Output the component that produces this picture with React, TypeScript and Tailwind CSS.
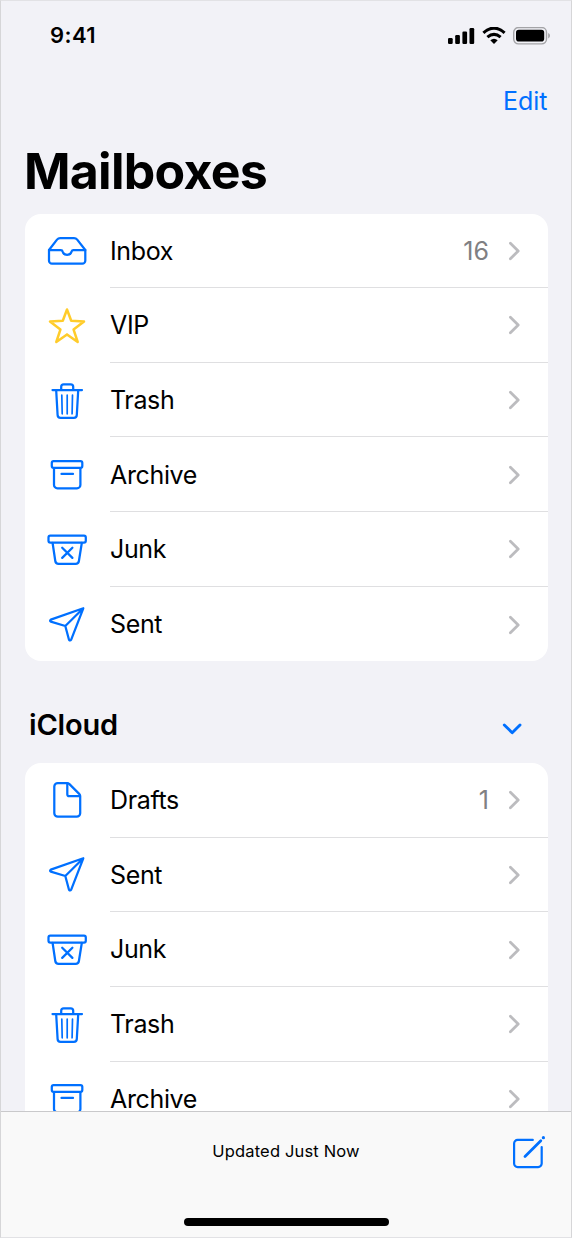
import type { ReactNode } from 'react';

type IconName = 'inbox' | 'star' | 'trash' | 'archive' | 'junk' | 'sent' | 'draft';

type Mailbox = {
  label: string;
  icon: IconName;
  count?: number;
};

const favorites: Mailbox[] = [
  { label: 'Inbox', icon: 'inbox', count: 16 },
  { label: 'VIP', icon: 'star' },
  { label: 'Trash', icon: 'trash' },
  { label: 'Archive', icon: 'archive' },
  { label: 'Junk', icon: 'junk' },
  { label: 'Sent', icon: 'sent' },
];

const icloud: Mailbox[] = [
  { label: 'Drafts', icon: 'draft', count: 1 },
  { label: 'Sent', icon: 'sent' },
  { label: 'Junk', icon: 'junk' },
  { label: 'Trash', icon: 'trash' },
  { label: 'Archive', icon: 'archive' },
];

const iconPaths: Record<IconName, ReactNode> = {
  inbox: (
    <>
      <path d="M4 22 12 11.6Q13.3 10 15.2 10H29Q31 10 32.2 11.6L40.3 22V32.7a3 3 0 0 1-3 3H7a3 3 0 0 1-3-3Z" />
      <path d="M4 22H15.8Q17.3 22 17.6 23.5a4.6 4.2 0 0 0 9 0Q27 22 28.4 22H40.3" />
    </>
  ),
  star: <path d="M22 6.5 26.2 17.8 39 18.6 28.6 26.6 32.7 39 22 31.4 11.3 39 15.4 26.6 5 18.6 17.8 17.8Z" />,
  trash: (
    <>
      <path d="M7.5 12H37M16.2 11.5V8.8a2.5 2.5 0 0 1 2.5-2.5H25.7a2.5 2.5 0 0 1 2.5 2.5V11.5" />
      <path d="M11.2 12.5 12.6 37a3 3 0 0 0 3 2.9H28.8a3 3 0 0 0 3-2.9L33.2 12.5" />
      <path d="M16.8 17.2 17.2 35.8M22.2 17.2V35.8M27.5 17.2 27.1 35.8" strokeWidth="1.7" />
    </>
  ),
  archive: (
    <>
      <rect x="6.8" y="9" width="30.5" height="6.8" rx="1.8" />
      <path d="M9 16V32.9a3.4 3.4 0 0 0 3.4 3.4H32a3.4 3.4 0 0 0 3.4-3.4V16M16.5 21.9H28" />
    </>
  ),
  junk: (
    <>
      <rect x="3.5" y="8.7" width="37.3" height="6.8" rx="1.8" />
      <path d="M7.6 16 10.3 34a3.4 3.4 0 0 0 3.3 2.9H30.6a3.4 3.4 0 0 0 3.3-2.9L36.8 16" />
      <path d="M17.2 20.7 27.4 30.9M27.4 20.7 17.2 30.9" />
    </>
  ),
  sent: <path d="M38.3 6.3 5.8 17.6Q4.4 18.6 5.8 19.7L20.3 24 24 37.7Q25.2 39.2 26.2 37.7ZL20.3 24" />,
  draft: (
    <>
      <path d="M12.8 5H22.2Q23.4 5 24.2 5.9L34.2 15.9Q35.2 16.9 35.2 18V35.2a3.5 3.5 0 0 1-3.5 3.5H12.8a3.5 3.5 0 0 1-3.5-3.5V8.5A3.5 3.5 0 0 1 12.8 5Z" />
      <path d="M22.3 5.5V16.2a2 2 0 0 0 2 2H34.8" />
    </>
  ),
};

function MailboxIcon({ name }: { name: IconName }) {
  return (
    <svg
      viewBox="0 0 44 44"
      className={name === 'star' ? 'mb-[1px] size-11 text-[#ffcc2b]' : 'mb-[1px] size-11 text-[#0070ff]'}
      fill="none"
      stroke="currentColor"
      strokeWidth={name === 'star' ? 2.5 : 2.25}
      strokeLinecap="round"
      strokeLinejoin="round"
      aria-hidden
    >
      {iconPaths[name]}
    </svg>
  );
}

function MailboxRow({ mailbox }: { mailbox: Mailbox }) {
  return (
    <li className="group flex h-[74.67px] items-center pl-[20.5px]">
      <MailboxIcon name={mailbox.icon} />
      <div className="ml-[21px] flex h-full flex-1 items-center border-b-[1.5px] border-[#dfdfe1] pr-[27.5px] group-last:border-b-0">
        <span className="flex-1 pt-0.5 text-[25px] tracking-[-0.35px]">{mailbox.label}</span>
        {mailbox.count && <span className="mr-[19px] pt-0.5 text-[25px] text-[#808083]">{mailbox.count}</span>}
        <svg viewBox="0 0 12 20" className="mt-px h-5 w-3" fill="none" stroke="#bcbcbf" strokeWidth="2.8" strokeLinecap="round" strokeLinejoin="round" aria-hidden>
          <path d="M2.4 2.3 10.2 10 2.4 17.7" />
        </svg>
      </div>
    </li>
  );
}

function MailboxList({ mailboxes }: { mailboxes: Mailbox[] }) {
  return (
    <ul className="mx-[23.5px] overflow-hidden rounded-2xl bg-white">
      {mailboxes.map((mailbox) => (
        <MailboxRow key={mailbox.label} mailbox={mailbox} />
      ))}
    </ul>
  );
}

function StatusBar() {
  return (
    <div className="flex h-[69px] items-center justify-between pr-5 pl-[49px]">
      <span className="text-[22px] font-semibold tracking-[0.4px]">9:41</span>
      <div className="flex items-center gap-[7px]">
        <svg viewBox="0 0 27 18" className="h-[18px] w-[27px]" aria-hidden>
          <rect x="0" y="11" width="4.7" height="6" rx="1.2" />
          <rect x="7.2" y="8" width="4.7" height="9" rx="1.2" />
          <rect x="14.4" y="4.5" width="4.7" height="12.5" rx="1.2" />
          <rect x="21.5" y="1" width="4.7" height="16" rx="1.2" />
        </svg>
        <svg viewBox="0 0 24 18" className="h-[18px] w-6" fill="none" stroke="#000" strokeWidth="3.1" aria-hidden>
          <path d="M1.4 5.8Q12-3.5 22.6 5.8M5.4 10.1Q12 4.5 18.6 10.1" />
          <path d="M8.3 13.2Q12 10.2 15.7 13.2L12 17Z" fill="#000" stroke="none" />
        </svg>
        <svg viewBox="0 0 38 18" className="h-[18px] w-[38px]" aria-hidden>
          <rect x="0.7" y="0.5" width="32.8" height="16.4" rx="4.8" fill="none" stroke="#a4a4a7" strokeWidth="1.4" />
          <rect x="3" y="2.8" width="28.2" height="11.8" rx="2.8" />
          <path d="M35.2 6Q37 6.8 37 8.7T35.2 11.4Z" fill="#a4a4a7" />
        </svg>
      </div>
    </div>
  );
}

function Toolbar() {
  return (
    <footer className="flex h-[126px] shrink-0 flex-col border-t border-[#c9c9cb] bg-[#f9f9f9]">
      <div className="grid h-20 grid-cols-[1fr_auto_1fr] items-center">
        <span />
        <span className="pb-px text-[16.5px] tracking-[0.16px]">Updated Just Now</span>
        <button type="button" aria-label="Compose" className="mr-[25.5px] mb-px justify-self-end">
          <svg viewBox="0 0 36 36" className="size-9" fill="none" stroke="#0070ff" strokeWidth="2.2" strokeLinecap="round" aria-hidden>
            <path d="M22.8 5.9H7.6a3.5 3.5 0 0 0-3.5 3.5V29.6a3.5 3.5 0 0 0 3.5 3.5H28.2a3.5 3.5 0 0 0 3.5-3.5V13" />
            <path d="M15 22.4 30.8 6.7" strokeWidth="2.8" />
            <circle cx="33.4" cy="3.7" r="1.6" fill="#0070ff" stroke="none" />
          </svg>
        </button>
      </div>
      <div className="mt-[26px] h-2 w-[205px] self-center rounded-full bg-black" />
    </footer>
  );
}

export default function App() {
  return (
    <div className="flex h-[1238px] w-[572px] flex-col overflow-hidden border border-x-[#d6d6d8] border-y-[#e2e2e5] bg-[#f2f2f7] font-['Inter',sans-serif] text-black">
      <div className="min-h-0 flex-1 overflow-hidden">
        <StatusBar />
        <div className="flex h-[62px] items-center justify-end pt-0.5 pr-[23.5px]">
          <button type="button" className="text-[25px] text-[#0070ff]">Edit</button>
        </div>
        <h1 className="flex h-[81.5px] items-center pb-0.5 pl-[23px] text-[50px] font-bold tracking-[-0.75px]">Mailboxes</h1>
        <MailboxList mailboxes={favorites} />
        <div className="flex h-[101.5px] items-center justify-between pt-[29px] pr-[49px] pb-[3px] pl-[28px]">
          <h2 className="text-[29px] font-semibold tracking-[-0.2px]">iCloud</h2>
          <svg viewBox="0 0 20 12" className="mt-2 h-3 w-5" fill="none" stroke="#0070ff" strokeWidth="2.9" strokeLinecap="round" strokeLinejoin="round" aria-hidden>
            <path d="M2.3 2 10.2 9.7 18 2" />
          </svg>
        </div>
        <MailboxList mailboxes={icloud} />
      </div>
      <Toolbar />
    </div>
  );
}
